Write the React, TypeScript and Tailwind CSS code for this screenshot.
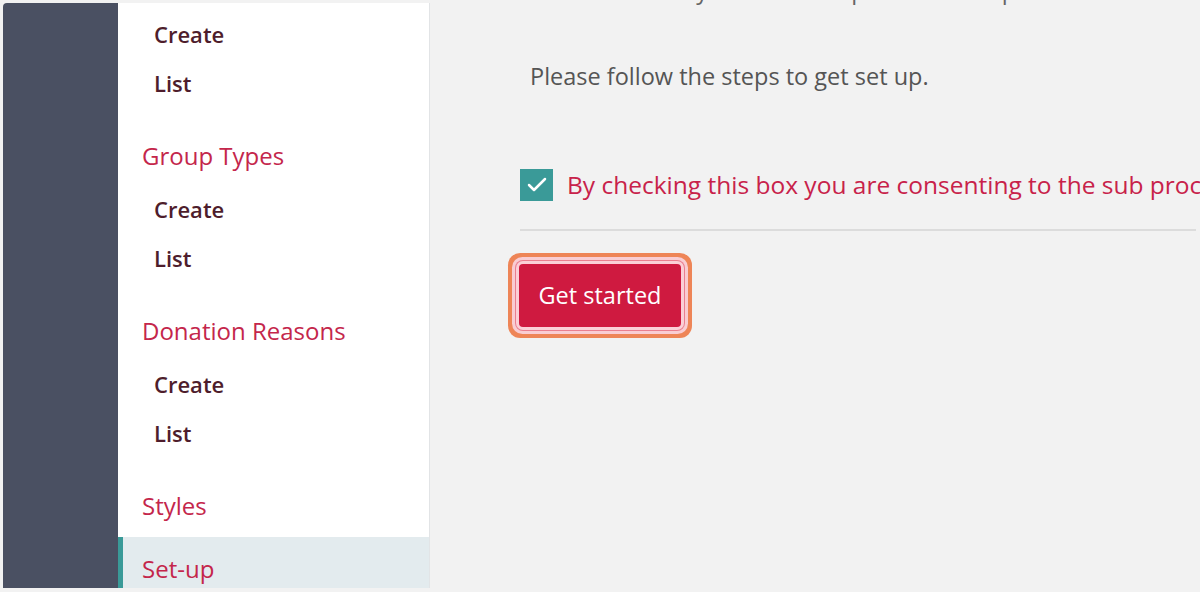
import { Check } from 'lucide-react';

const font = { fontFamily: '"Open Sans", "Noto Sans", Arial, sans-serif' };

type Group = { title: string; items: string[] };

const groups: Group[] = [
  { title: 'Group Types', items: ['Create', 'List'] },
  { title: 'Donation Reasons', items: ['Create', 'List'] },
];

function SubItem({ label }: { label: string }) {
  return (
    <div className="flex h-[49px] shrink-0 items-center pl-[36px] text-[22px] font-semibold text-[#4e1d2c]">
      {label}
    </div>
  );
}

function Heading({ label }: { label: string }) {
  return (
    <div className="mt-[18px] flex h-[59px] shrink-0 items-center pl-[24px] text-[24px] font-medium text-[#c4264b]">
      {label}
    </div>
  );
}

export default function App() {
  return (
    <div
      className="flex h-[592px] w-[1200px] overflow-hidden bg-[#f2f2f2] pb-[4px] pl-[3px] pt-[3px]"
      style={font}
    >
      {/* dark rail */}
      <div className="w-[115px] shrink-0 rounded-tl-[4px] bg-[#4a5062]" />

      {/* nav */}
      <nav className="flex w-[312px] shrink-0 flex-col overflow-hidden border-r border-[#e2e4e6] bg-white pt-[7px]">
        <SubItem label="Create" />
        <SubItem label="List" />
        {groups.map((g) => (
          <div key={g.title} className="flex shrink-0 flex-col">
            <Heading label={g.title} />
            {g.items.map((i) => (
              <SubItem key={i} label={i} />
            ))}
          </div>
        ))}
        <Heading label="Styles" />
        <div className="mt-[2px] flex h-[64px] shrink-0 items-center border-l-[5px] border-[#3a9a98] bg-[#e3ebee] pl-[19px] text-[24px] font-medium text-[#c4264b]">
          Set-up
        </div>
      </nav>

      {/* main */}
      <main className="flex min-w-0 flex-1 flex-col pl-[89px] pr-[4px]">
        <p className="-mt-[27px] whitespace-nowrap pl-[78px] text-[23.5px] leading-[28px] text-[#666]">
          You'll only need to complete the setup once
        </p>
        <p className="mt-[58px] whitespace-nowrap pl-[11px] text-[23.5px] leading-[28px] text-[#555]">
          Please follow the steps to get set up.
        </p>

        <label className="ml-[1px] mt-[79px] flex items-center gap-[14px] whitespace-nowrap">
          <span className="flex h-[32px] w-[33px] shrink-0 items-center justify-center bg-[#3a9a98]">
            <Check className="h-[24px] w-[24px] text-white" strokeWidth={2.5} />
          </span>
          <span className="text-[24.5px] font-medium leading-[32px] text-[#c8224a]">
            By checking this box you are consenting to the sub processors and terms
          </span>
        </label>

        <hr className="ml-[1px] mt-[28px] border-t-[2px] border-[#dcdcdc]" />

        <div className="mt-[33px]">
          <button className="h-[63px] w-[162px] rounded-[4px] bg-[#cf1a40] text-[23.5px] text-white shadow-[0_0_0_3px_#fbd0d7,0_0_0_4px_#ea7f8f,0_0_0_7px_#f9cdd3,0_0_0_11px_#ee8557]">
            Get started
          </button>
        </div>
      </main>
    </div>
  );
}
